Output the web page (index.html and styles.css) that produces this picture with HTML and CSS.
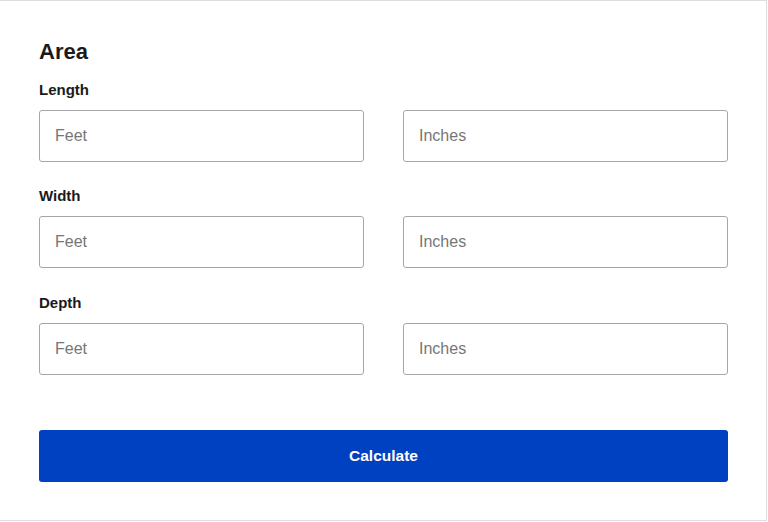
FILE: index.html
```html
<!DOCTYPE html>
<html lang="en">
<head>
<meta charset="utf-8">
<title>Area</title>
<link rel="stylesheet" href="styles.css">
</head>
<body>
<div class="card">
  <h2 class="title">Area</h2>
  <div class="group">
    <label class="label">Length</label>
    <div class="row">
      <input class="field" type="text" placeholder="Feet">
      <input class="field" type="text" placeholder="Inches">
    </div>
  </div>
  <div class="group">
    <label class="label">Width</label>
    <div class="row">
      <input class="field" type="text" placeholder="Feet">
      <input class="field" type="text" placeholder="Inches">
    </div>
  </div>
  <div class="group group-last">
    <label class="label">Depth</label>
    <div class="row">
      <input class="field" type="text" placeholder="Feet">
      <input class="field" type="text" placeholder="Inches">
    </div>
  </div>
  <button class="btn" type="button">Calculate</button>
</div>
</body>
</html>
```

FILE: styles.css
```css
* { box-sizing: border-box; }
html, body { margin: 0; padding: 0; background: #fff; }
body {
  font-family: "Liberation Sans", Arial, sans-serif;
  color: #1a1a1a;
  width: 768px;
  height: 522px;
  overflow: hidden;
}
.card {
  width: 767px;
  height: 521px;
  border: 1px solid #dedede;
  border-left: none;
  padding: 38px 38px 0 39px;
}
.title {
  margin: 0;
  font-size: 22px;
  font-weight: bold;
  line-height: 25px;
  color: #1a1a1a;
}
.group {
  margin-top: 17px;
}
.group + .group {
  margin-top: 25px;
}
.group + .group-last {
  margin-top: 26px;
}
.label {
  display: block;
  font-size: 15px;
  font-weight: bold;
  line-height: 18px;
  color: #1a1a1a;
}
.row {
  display: grid;
  grid-template-columns: 1fr 1fr;
  column-gap: 39px;
  margin-top: 11px;
}
.field {
  height: 52px;
  border: 1px solid #a6a6a6;
  border-radius: 3px;
  padding: 0 15px;
  font-family: "Liberation Sans", Arial, sans-serif;
  font-size: 16px;
  color: #1a1a1a;
  background: #fff;
  outline: none;
  width: 100%;
}
.field::placeholder { color: #767676; opacity: 1; }
.btn {
  display: block;
  width: 100%;
  height: 52px;
  margin-top: 55px;
  border: none;
  border-radius: 3px;
  background: #0041c2;
  color: #fff;
  font-family: "Liberation Sans", Arial, sans-serif;
  font-size: 15.5px;
  font-weight: bold;
  cursor: pointer;
}
```
